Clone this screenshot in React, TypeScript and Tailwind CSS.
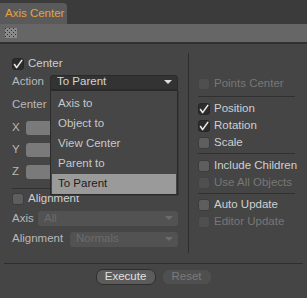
import React from "react";

const font = { fontFamily: '"Liberation Sans", Arial, sans-serif' };

function Check({ state }: { state: "on" | "off" | "dis" }) {
  if (state === "on")
    return (
      <div className="w-[12px] h-[12px] rounded-[3px] bg-[#2c2c2c] border border-[#262626] flex items-center justify-center shrink-0">
        <svg width="10" height="10" viewBox="0 0 10 10">
          <path d="M1.5 5.5 L3.6 8.6 L8.8 1.4" fill="none" stroke="#e8e8e8" strokeWidth="1.6" strokeLinecap="round" strokeLinejoin="round" />
        </svg>
      </div>
    );
  if (state === "dis")
    return <div className="w-[12px] h-[12px] rounded-[3px] bg-[#4f4f4f] border border-[#434343] shrink-0" />;
  return <div className="w-[12px] h-[12px] rounded-[3px] bg-[#5e5e5e] border border-[#3c3c3c] shrink-0" />;
}

function CheckRow({ label, state, h = 17 }: { label: string; state: "on" | "off" | "dis"; h?: number }) {
  return (
    <div className="flex items-center gap-[4px] whitespace-nowrap" style={{ height: h }}>
      <Check state={state} />
      <span className={state === "dis" ? "text-[#777777]" : "text-[#cfcfcf]"}>{label}</span>
    </div>
  );
}

function Arrow({ color }: { color: string }) {
  return (
    <svg width="8" height="5" viewBox="0 0 8 5">
      <path d="M0 0 L8 0 L4 4 Z" fill={color} />
    </svg>
  );
}

function Grip() {
  const dots = [];
  for (let r = 0; r < 5; r++)
    for (let c = 0; c < 6; c++)
      if ((r + c) % 2 === 0) dots.push(<rect key={`${r}-${c}`} x={c * 2} y={r * 2} width="1" height="1" fill="#2e2e2e" />);
  return (
    <svg width="12" height="10" viewBox="0 0 12 10">
      <rect x="0" y="0" width="12" height="10" fill="#8a8a8a" />
      {dots}
    </svg>
  );
}

export default function App() {
  return (
    <div className="w-[307px] h-[298px] bg-[#454545] flex flex-col text-[11.5px] leading-none overflow-hidden whitespace-nowrap" style={font}>
      <div className="h-[24px] bg-[#3b3b3b] flex items-end shrink-0">
        <div className="h-[21px] w-[67px] bg-[#5a5a5a] rounded-tr-[4px] flex items-center pl-[5px] text-[11.5px] text-[#e3a43c]">
          Axis Center
        </div>
      </div>
      <div className="h-[18px] bg-[#666666] flex items-center pl-[5px] shrink-0">
        <Grip />
      </div>
      <div className="h-[2px] bg-[#303030] shrink-0" />

      <div className="flex h-[214px] shrink-0">
        {/* left column */}
        <div className="w-[178px] pl-[12px] pt-[13px] flex flex-col relative">
          <div className="h-[14px] flex items-center gap-[4px]">
            <Check state="on" />
            <span className="text-[#cfcfcf]">Center</span>
          </div>
          <div className="h-[22px] flex items-center">
            <span className="w-[38px] text-[#b8b8b8]">Action</span>
            <div className="flex-1 h-[15px] bg-[#333333] border border-[#2a2a2a] rounded-t-[3px] flex items-center justify-between pl-[6px] pr-[5px] text-[#d4d4d4]">
              <span>To Parent</span>
              <Arrow color="#e0e0e0" />
            </div>
          </div>
          <div className="h-[24px] flex items-center text-[#b8b8b8]">Center</div>
          {["X", "Y", "Z"].map((a) => (
            <div key={a} className="h-[22px] flex items-center">
              <span className="w-[14px] text-[#b8b8b8]">{a}</span>
              <div className="w-[40px] h-[14px] bg-[#7a7a7a] rounded-[3px]" />
            </div>
          ))}
          <div className="mt-[5px] border-t border-[#303030]" />
          <div className="h-[20px] flex items-center gap-[4px]">
            <Check state="off" />
            <span className="text-[#cfcfcf]">Alignment</span>
          </div>
          <div className="h-[19px] flex items-center">
            <span className="w-[26px] text-[#b8b8b8]">Axis</span>
            <div className="flex-1 h-[15px] bg-[#525252] rounded-[3px] flex items-center justify-between pl-[6px] pr-[5px] text-[#6c6c6c]">
              <span>All</span>
              <Arrow color="#6c6c6c" />
            </div>
          </div>
          <div className="h-[22px] flex items-center">
            <span className="w-[58px] text-[#b8b8b8]">Alignment</span>
            <div className="flex-1 h-[15px] bg-[#525252] rounded-[3px] flex items-center justify-between pl-[6px] pr-[5px] text-[#6c6c6c]">
              <span>Normals</span>
              <Arrow color="#6c6c6c" />
            </div>
          </div>

          {/* popup menu */}
          <div className="absolute left-[50px] top-[46px] w-[128px] h-[105px] bg-[#464646] border border-[#2a2a2a] flex flex-col pt-[3px] px-[1px] text-[#c8c8c8] shadow-[1px_1px_0_#3a3a3a]">
            {["Axis to", "Object to", "View Center", "Parent to"].map((t) => (
              <div key={t} className="h-[20px] flex items-center pl-[6px]">{t}</div>
            ))}
            <div className="h-[20px] flex items-center pl-[6px] bg-[#9a9a9a] text-[#1c1c1c]">To Parent</div>
          </div>
        </div>

        {/* divider */}
        <div className="ml-[10px] mt-[9px] w-[1px] h-[200px] bg-[#2e2e2e]" />

        {/* right column */}
        <div className="ml-[9px] w-[97px] pt-[31px] flex flex-col">
          <CheckRow label="Points Center" state="dis" h={18} />
          <div className="mt-[3px] border-t border-[#303030]" />
          <div className="mt-[3px]" />
          <CheckRow label="Position" state="on" />
          <CheckRow label="Rotation" state="on" />
          <CheckRow label="Scale" state="off" />
          <div className="mt-[2px] border-t border-[#303030]" />
          <div className="mt-[3px]" />
          <CheckRow label="Include Children" state="off" />
          <CheckRow label="Use All Objects" state="dis" />
          <div className="mt-[2px] border-t border-[#303030]" />
          <div className="mt-[2px]" />
          <CheckRow label="Auto Update" state="off" />
          <CheckRow label="Editor Update" state="dis" />
        </div>
      </div>

      <div className="mt-[5px] mx-[4px] border-t border-[#2e2e2e]" />
      <div className="flex justify-center gap-[6px] pt-[5px]">
        <button className="w-[60px] h-[16px] rounded-[7px] bg-[#5c5c5c] border border-[#2e2e2e] text-[#e0e0e0] text-[11.5px] leading-none flex items-center justify-center" style={font}>
          Execute
        </button>
        <button className="w-[50px] h-[16px] rounded-[7px] bg-[#4f4f4f] border border-[#454545] text-[#7a7a7a] text-[11.5px] leading-none flex items-center justify-center" style={font}>
          Reset
        </button>
      </div>
    </div>
  );
}
